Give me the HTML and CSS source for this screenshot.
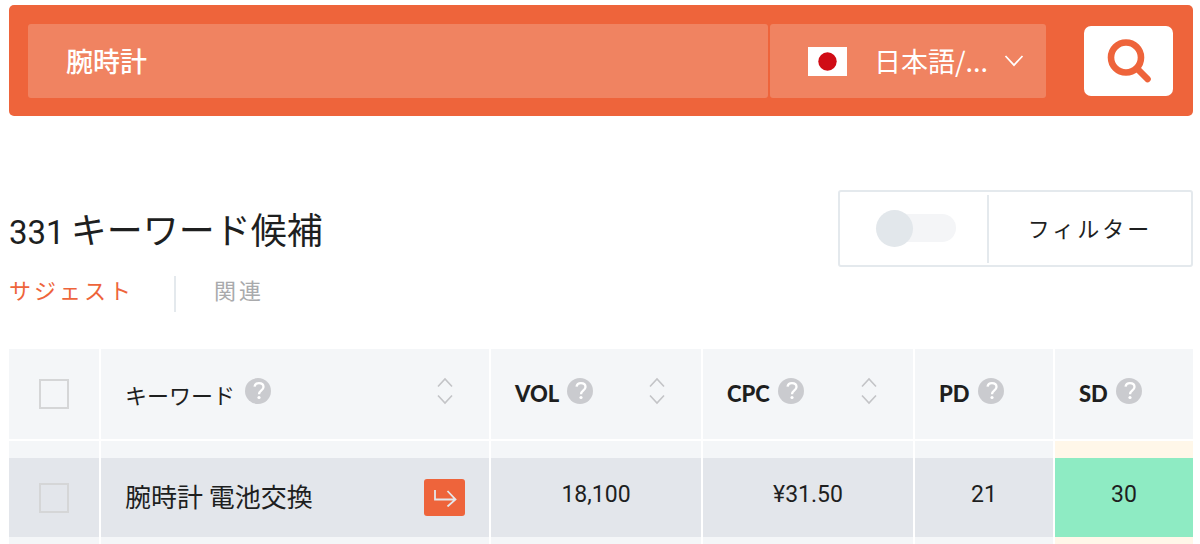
FILE: index.html
```html
<!DOCTYPE html>
<html lang="ja">
<head>
<meta charset="utf-8">
<meta name="viewport" content="width=device-width, initial-scale=1">
<title>キーワード候補</title>
<link rel="stylesheet" href="styles.css">
</head>
<body>
<svg class="sprite" aria-hidden="true">
  <symbol id="help" viewBox="0 0 26 26">
    <circle cx="13" cy="13" r="13" fill="#cacbcf"/>
    <path d="M9.500 8.600C9.900 6.500 11.600 5.200 13.900 5.200c2.700 0 4.600 1.500 4.600 3.800 0 3.300-4.500 3.400-4.500 7.200" fill="none" stroke="#fff" stroke-width="2.300"/>
    <circle cx="14" cy="19.500" r="1.600" fill="#fff"/>
  </symbol>
  <symbol id="sort" viewBox="0 0 16 28">
    <path d="M1 9.500 8 2l7 7.500M1 18.500 8 26l7-7.500" fill="none" stroke="#c3c4c7" stroke-width="1.600"/>
  </symbol>
</svg>
<main class="page">
  <form class="search">
    <div class="fields">
      <input class="field query" type="text" value="腕時計" aria-label="キーワード">
      <div class="field language">
        <svg class="flag" viewBox="0 0 39 29" aria-hidden="true"><path fill="#fff" d="M0 0h39v29H0z"/><circle cx="19.500" cy="14.500" r="9.200" fill="#d00c15"/></svg>
        <select class="language-select" aria-label="言語"><option>日本語/...</option></select>
        <svg class="chevron" viewBox="0 0 20 12" aria-hidden="true"><path d="M1.500 1 10 10.200 18.500 1" fill="none" stroke="#fff" stroke-width="1.700"/></svg>
      </div>
    </div>
    <button class="search-button" type="button" aria-label="検索">
      <svg class="search-icon" viewBox="0 0 44 44" aria-hidden="true"><g fill="none" stroke="#ee643b" stroke-width="6.600" stroke-linecap="round"><circle cx="19" cy="18.500" r="15"/><path d="M30.500 30 40.500 40"/></g></svg>
    </button>
  </form>

  <section class="summary">
    <div>
      <h1 class="title"><span class="count">331</span> <span>キーワード候補</span></h1>
      <nav class="tabs">
        <a class="tab active" href="#suggest">サジェスト</a>
        <a class="tab" href="#related">関連</a>
      </nav>
    </div>
    <div class="filter">
      <div class="toggle-area"><input class="toggle" type="checkbox" aria-label="フィルターを有効にする"></div>
      <button class="filter-button" type="button">フィルター</button>
    </div>
  </section>

  <div class="results">
    <table class="keywords">
      <colgroup><col class="col-check"><col><col class="col-value"><col class="col-value"><col class="col-score"><col class="col-score"></colgroup>
      <thead>
        <tr>
          <th scope="col"><div class="cell centered"><input class="check" type="checkbox" aria-label="すべて選択"></div></th>
          <th scope="col"><div class="cell"><span class="label-ja">キーワード</span><svg class="help"><use href="#help"/></svg><button class="sort" type="button" aria-label="キーワードで並べ替え"><svg class="sort-icon"><use href="#sort"/></svg></button></div></th>
          <th scope="col"><div class="cell"><span class="label">VOL</span><svg class="help"><use href="#help"/></svg><button class="sort" type="button" aria-label="VOLで並べ替え"><svg class="sort-icon"><use href="#sort"/></svg></button></div></th>
          <th scope="col"><div class="cell"><span class="label">CPC</span><svg class="help"><use href="#help"/></svg><button class="sort" type="button" aria-label="CPCで並べ替え"><svg class="sort-icon"><use href="#sort"/></svg></button></div></th>
          <th scope="col"><div class="cell"><span class="label">PD</span><svg class="help"><use href="#help"/></svg></div></th>
          <th scope="col"><div class="cell"><span class="label">SD</span><svg class="help"><use href="#help"/></svg></div></th>
        </tr>
      </thead>
      <tbody>
        <tr>
          <td><div class="cell centered"><input class="check" type="checkbox" aria-label="腕時計 電池交換を選択"></div></td>
          <td><div class="cell"><span class="keyword">腕時計 電池交換</span><button class="open" type="button" aria-label="キーワードを開く"><svg class="open-icon" viewBox="0 0 24 18" aria-hidden="true"><path d="M2 1v9.500h20M14.500 2l8 8.500-8 7" fill="none" stroke="#e4e7ec" stroke-width="1.800"/></svg></button></div></td>
          <td><div class="cell centered number">18,100</div></td>
          <td><div class="cell centered number">¥31.50</div></td>
          <td><div class="cell centered number">21</div></td>
          <td class="easy"><div class="cell centered number">30</div></td>
        </tr>
      </tbody>
    </table>
  </div>
</main>
</body>
</html>
```
FILE: styles.css
```css
* {
  box-sizing: border-box;
}

body {
  margin: 0;
  background: #fff;
  color: #1e1f1f;
  font-family: "Noto Sans CJK JP", sans-serif;
}

button,
input,
select {
  margin: 0;
  padding: 0;
  border: 0;
  color: inherit;
  font: inherit;
}

.sprite {
  display: none;
}

svg {
  display: block;
  flex: none;
}

.page {
  padding: 5px 7px 0 9px;
}

/* Search bar */
.search {
  display: flex;
  align-items: center;
  gap: 38px;
  padding: 19px 20px 18px 19px;
  border-radius: 5px;
  background: #ee643b;
}

.fields {
  display: flex;
  flex: 1;
  gap: 2px;
  min-width: 0;
}

.field {
  height: 74px;
  border-radius: 3px;
  background: #f08361;
  color: #fff;
  font-size: 27px;
}

.query {
  flex: 1;
  min-width: 0;
  padding: 0 38px 2px;
  font-weight: 500;
}

.language {
  display: flex;
  align-items: center;
  width: 276px;
  padding: 0 22px 0 38px;
}

.flag {
  width: 39px;
  height: 29px;
}

.language-select {
  flex: 1;
  min-width: 0;
  margin-left: 27px;
  padding-bottom: 2px;
  appearance: none;
  background: transparent;
}

.chevron {
  width: 20px;
  height: 12px;
}

.search-button {
  display: grid;
  place-items: center;
  width: 89px;
  height: 70px;
  border-radius: 7px;
  background: #fff;
}

.search-icon {
  width: 44px;
  height: 44px;
}

/* Title, tabs and filter */
.summary {
  display: flex;
  justify-content: space-between;
  align-items: flex-start;
  margin-top: 74px;
}

.title {
  display: flex;
  align-items: baseline;
  gap: 6px;
  margin: 12px 0 0;
  font-size: 36px;
  font-weight: 400;
  line-height: 52px;
}

.count {
  font-family: Roboto, sans-serif;
  font-size: 33px;
}

.tabs {
  display: flex;
  margin-top: 17px;
}

.tab {
  height: 36px;
  padding: 0 38px;
  color: #a9aaac;
  font-size: 22px;
  line-height: 26px;
  letter-spacing: 3px;
  text-decoration: none;
}

.tab.active {
  padding: 0 40px 0 0;
  border-right: 2px solid #e4e9ed;
  color: #ee643b;
}

.filter {
  display: flex;
  height: 77px;
  padding: 3px 0 2px;
  border: 2px solid #e4e9ed;
  border-radius: 3px;
}

.toggle-area {
  display: flex;
  align-items: center;
  padding: 0 31px 2px 36px;
  border-right: 2px solid #e4e9ed;
}

.toggle {
  position: relative;
  width: 80px;
  height: 37px;
  appearance: none;
}

.toggle::before {
  content: "";
  position: absolute;
  inset: 4px 0 5px 8px;
  border-radius: 14px;
  background: #f4f5f7;
}

.toggle::after {
  content: "";
  position: absolute;
  inset: 0 auto 0 0;
  width: 37px;
  border-radius: 50%;
  background: #e2e7eb;
}

.filter-button {
  width: 202px;
  padding-bottom: 4px;
  background: transparent;
  font-size: 22px;
  letter-spacing: 3px;
}

/* Keyword table */
.results {
  margin: 37px -2px 0;
}

.keywords {
  width: 100%;
  table-layout: fixed;
  border-collapse: separate;
  border-spacing: 2px 0;
}

.col-check {
  width: 90px;
}

.col-value {
  width: 210px;
}

.col-score {
  width: 138px;
}

th,
td {
  padding: 0;
}

th {
  border-bottom: 2px solid #fff;
  background: #f4f6f8;
}

td {
  border: solid #f4f6f8;
  border-width: 17px 0 7px;
  background: #e3e6eb;
}

td.easy {
  border-color: #fff7e9;
  background: #8eebc3;
}

.cell {
  display: flex;
  align-items: center;
  height: 90px;
  padding: 0 24px;
}

td .cell {
  height: 79px;
}

.cell.centered {
  justify-content: center;
  padding: 0;
}

.cell.number {
  padding-bottom: 6px;
  font-family: Roboto, sans-serif;
  font-size: 23px;
}

.label {
  padding-bottom: 2px;
  font-family: Lato, sans-serif;
  font-size: 22px;
  font-weight: 900;
}

.label-ja {
  font-size: 22px;
  font-weight: 400;
}

.help {
  width: 26px;
  height: 26px;
  margin: 0 0 6px 10px;
}

.label + .help {
  margin-left: 8px;
}

.sort {
  margin: 0 12px 6px auto;
  background: transparent;
}

.sort-icon {
  width: 16px;
  height: 28px;
}

.check {
  width: 30px;
  height: 30px;
  border: 2px solid #d5d6d7;
  appearance: none;
}

.keyword {
  padding-bottom: 4px;
  font-size: 26px;
}

.open {
  display: grid;
  place-items: center;
  width: 41px;
  height: 37px;
  margin-left: auto;
  border-radius: 3px;
  background: #ee643b;
}

.open-icon {
  width: 24px;
  height: 18px;
}
```
